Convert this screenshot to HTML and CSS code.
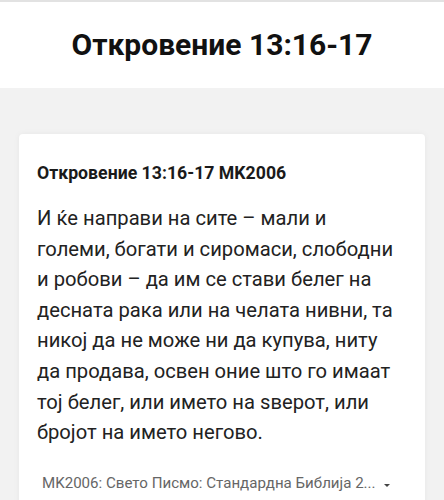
FILE: index.html
```html
<!DOCTYPE html>
<html lang="mk">
<head>
<meta charset="utf-8">
<link rel="stylesheet" href="styles.css">
</head>
<body>
<header class="topbar">
  <h1 class="title">Откровение 13:16-17</h1>
</header>
<main class="content">
  <article class="card">
    <h2 class="ref">Откровение 13:16-17 MK2006</h2>
    <p class="verse">И ќе направи на сите – мали и големи, богати и сиромаси, слободни и робови – да им се стави белег на десната рака или на челата нивни, та никој да не може ни да купува, ниту да продава, освен оние што го имаат тој белег, или името на ѕверот, или бројот на името негово.</p>
    <div class="version">
      <span class="version-name">MK2006: Свето Писмо: Стандардна Библија 2...</span>
      <span class="caret"></span>
    </div>
  </article>
</main>
</body>
</html>
```
FILE: styles.css
```css
html, body {
  margin: 0;
  padding: 0;
}
body {
  font-family: Roboto, "Noto Sans", sans-serif;
  background: #f2f2f2;
  color: #1a1a1a;
  width: 444px;
  height: 500px;
  overflow: hidden;
}
.topbar {
  background: #fff;
  border-top: 2px solid #e2e2e2;
  height: 86px;
  display: flex;
  align-items: center;
  justify-content: center;
}
.title {
  margin: 0;
  font-size: 30px;
  font-weight: 700;
  color: #111;
  padding-bottom: 2px;
}
.content {
  padding: 46px 19px 0;
}
.card {
  background: #fff;
  border-radius: 4px;
  box-shadow: 0 0 6px rgba(0,0,0,0.05);
  padding: 27px 26px 20px 18px;
}
.ref {
  margin: 0;
  font-size: 17.7px;
  font-weight: 700;
  color: #1a1a1a;
  line-height: 24px;
}
.verse {
  margin: 18px 0 0;
  font-size: 20.2px;
  line-height: 30.6px;
  color: #222;
}
.version {
  margin-top: 26px;
  padding-left: 5px;
  display: flex;
  align-items: center;
  gap: 8px;
  color: #666;
  font-size: 15.1px;
  line-height: 18px;
}
.caret {
  width: 0;
  height: 0;
  border-left: 3px solid transparent;
  border-right: 3px solid transparent;
  border-top: 3px solid #444;
  margin-top: 5px;
}
```
